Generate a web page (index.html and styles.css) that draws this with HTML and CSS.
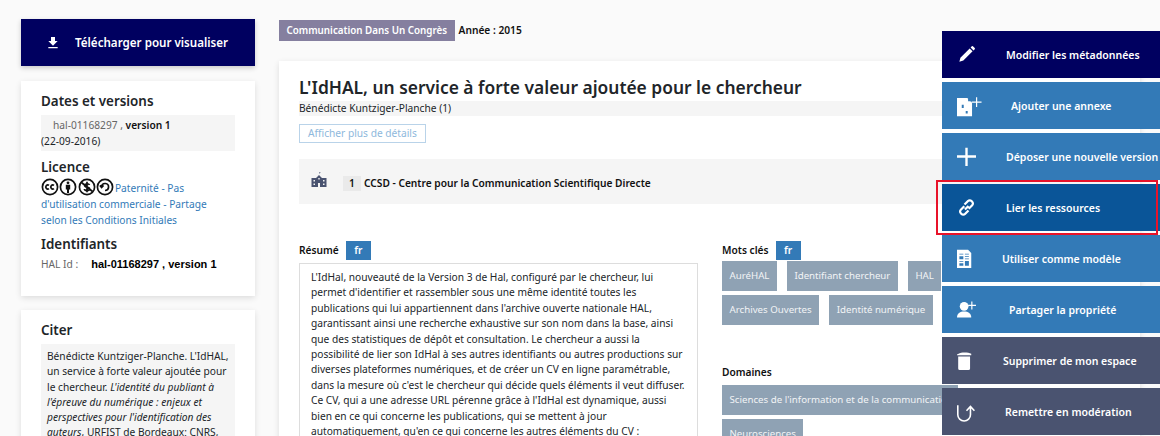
FILE: index.html
```html
<!DOCTYPE html>
<html lang="fr">
<head>
    <meta charset="UTF-8">
    <meta name="viewport" content="width=device-width, initial-scale=1.0">
    <title>L'IdHAL, un service à forte valeur ajoutée pour le chercheur</title>
    <link rel="stylesheet" href="styles.css">
</head>
<body>
    <div class="page">
        <div class="side">
            <a class="download">
                <svg class="download-icon" viewBox="0 0 24 24"><path d="M19 9h-4V3H9v6H5l7 7 7-7zM5 18v2h14v-2H5z"/></svg>
                Télécharger pour visualiser
            </a>

            <div class="box box-info">
                <h3>Dates et versions</h3>
                <div class="version">
                    <span class="version-id">hal-01168297 ,</span> <b>version 1</b><br>(22-09-2016)
                </div>
                <h3>Licence</h3>
                <div class="licence">
                    <svg class="cc" viewBox="0 0 18 18"><circle cx="9" cy="9" r="7.6"/><path d="M8 7.400a2 2 0 1 0 0 3.200M13 7.400a2 2 0 1 0 0 3.200"/></svg>
                    <svg class="cc" viewBox="0 0 18 18"><circle cx="9" cy="9" r="7.6"/><circle class="cc-fill" cx="9" cy="4.800" r="1.400"/><path class="cc-fill" d="M6.800 6.800h4.400v4.600H10V15H8v-3.600H6.800z"/></svg>
                    <svg class="cc" viewBox="0 0 18 18"><circle cx="9" cy="9" r="7.6"/><path d="M3.500 4.500l11 9M11.500 7A2.500 1.700 0 0 0 6.600 7.400c0 2.400 5 1 5 3.400A2.600 1.700 0 0 1 6.400 11M9 3.800v10.400"/></svg>
                    <svg class="cc" viewBox="0 0 18 18"><circle cx="9" cy="9" r="7.6"/><path d="M5.600 8.400A3.500 3.500 0 1 1 9 12.500M3.900 7.400l1.700 2 1.900-2"/></svg>
                    <a class="link">Paternité - Pas d'utilisation commerciale - Partage selon les Conditions Initiales</a>
                </div>
                <h3>Identifiants</h3>
                <div class="hal-id"><span class="hal-label">HAL Id :</span><b>hal-01168297 , version 1</b></div>
            </div>

            <div class="box box-cite">
                <h3>Citer</h3>
                <div class="citation">
                    Bénédicte Kuntziger-Planche. L'IdHAL, un service à forte valeur ajoutée pour le chercheur. <i>L'identité du publiant à l'épreuve du numérique : enjeux et perspectives pour l'identification des auteurs</i>, URFIST de Bordeaux; CNRS, 2015.
                </div>
            </div>
        </div>

        <div class="main">
            <div class="doc-type">
                <span class="type-tag">Communication Dans Un Congrès</span>
                <b>Année : 2015</b>
            </div>

            <div class="doc">
                <h1>L'IdHAL, un service à forte valeur ajoutée pour le chercheur</h1>
                <div class="authors">Bénédicte Kuntziger-Planche (1)</div>
                <a class="details-btn">Afficher plus de détails</a>

                <div class="affiliation">
                    <svg class="school" viewBox="0 0 16 18"><path d="M8 0v2.200l2 .6-2 .6V5l3 3h4.500v9H.5V8H5l3-3V0z"/><path class="school-win" d="M2.500 10h1.500v1.500H2.500zM2.500 13.500h1.500V15H2.500zM12 10h1.500v1.500H12zM12 13.500h1.500V15H12zM7.300 8h1.400v1.500H7.300zM7 13h2v4H7z"/></svg>
                    <span class="aff-num">1</span>
                    <b>CCSD - Centre pour la Communication Scientifique Directe</b>
                </div>

                <div class="columns">
                    <div class="col-left">
                        <div class="section-head"><b>Résumé</b><span class="lang">fr</span></div>
                        <div class="abstract">
                            L'IdHal, nouveauté de la Version 3 de Hal, configuré par le chercheur, lui permet d'identifier et rassembler sous une même identité toutes les publications qui lui appartiennent dans l'archive ouverte nationale HAL, garantissant ainsi une recherche exhaustive sur son nom dans la base, ainsi que des statistiques de dépôt et consultation. Le chercheur a aussi la possibilité de lier son IdHal à ses autres identifiants ou autres productions sur diverses plateformes numériques, et de créer un CV en ligne paramétrable, dans la mesure où c'est le chercheur qui décide quels éléments il veut diffuser. Ce CV, qui a une adresse URL pérenne grâce à l'IdHal est dynamique, aussi bien en ce qui concerne les publications, qui se mettent à jour automatiquement, qu'en ce qui concerne les autres éléments du CV :
                        </div>
                    </div>
                    <div class="col-right">
                        <div class="section-head"><b>Mots clés</b><span class="lang">fr</span></div>
                        <div class="tags">
                            <span class="tag">AuréHAL</span>
                            <span class="tag">Identifiant chercheur</span>
                            <span class="tag">HAL</span>
                            <span class="tag">Archives Ouvertes</span>
                            <span class="tag">Identité numérique</span>
                        </div>
                        <div class="domains-head"><b>Domaines</b></div>
                        <div class="tags">
                            <span class="tag">Sciences de l'information et de la communication</span>
                            <span class="tag">Neurosciences</span>
                        </div>
                    </div>
                </div>
            </div>
        </div>
    </div>

    <div class="actions">
        <a class="action action-navy">
            <svg viewBox="0 0 24 24"><path d="M3 21l1.300-5L16 4.300 19.700 8 8 19.700zM17.200 3.100l1.500-1.500a1 1 0 0 1 1.400 0l2.300 2.300a1 1 0 0 1 0 1.400l-1.500 1.500z"/></svg>
            <span class="label-edit">Modifier les métadonnées</span>
        </a>
        <a class="action">
            <svg viewBox="0 0 24 24"><path d="M0 2.500h13l6 6v17H0z"/><path class="icon-cut" d="M6 11h2.500v4H6zM11 19h2.500v3H11zM14 2.500v4h4.500z"/><path d="M24 1.500h1.500V7H31v1.500h-5.500V14H24V8.500h-5.500V7H24z"/></svg>
            <span class="label-annex">Ajouter une annexe</span>
        </a>
        <a class="action">
            <svg viewBox="0 0 24 24"><path d="M10.500 1h3v9.500H24v3H13.500V24h-3V13.500H0v-3h10.500z"/></svg>
            <span class="label-edit">Déposer une nouvelle version</span>
        </a>
        <a class="action action-dark">
            <svg class="icon-line icon-link" viewBox="0 0 24 24"><path d="M10 14.500l4.500-4.500M9.200 10.500l-4.400 4.400a3.100 3.100 0 0 0 0 4.400l.9.900a3.100 3.100 0 0 0 4.400 0l4.400-4.400M14.800 13.500l4.400-4.400a3.100 3.100 0 0 0 0-4.400l-.9-.9a3.100 3.100 0 0 0-4.400 0L9.500 8.200"/></svg>
            <span class="label-edit">Lier les ressources</span>
        </a>
        <a class="action">
            <svg viewBox="0 0 24 24"><path d="M0 1h14l4 4v19H0z"/><path class="icon-cut" d="M3 6h5v1H3zM10 6h5v1h-5zM3 9h5v4H3zM10 9h5v1h-5zM10 12h5v1h-5zM3 15h5v1H3zM3 18h5v3H3zM10 15h5v6h-5z"/></svg>
            <span class="label-model">Utiliser comme modèle</span>
        </a>
        <a class="action">
            <svg viewBox="0 0 24 24"><circle cx="9" cy="8" r="5.500"/><path d="M0 22c0-5 4-7.500 9-7.500s9 2.500 9 7.500z"/><path d="M18 2h1.500v4H24v1.500h-4.500V12H18V7.500h-4V6h4z"/></svg>
            <span class="label-share">Partager la propriété</span>
        </a>
        <a class="action action-slate">
            <svg viewBox="0 0 24 24"><path d="M2 3.500C5 1.500 14 1.500 18 3.500V5.500H0V4.500zM1.500 7h15v15a2 2 0 0 1-2 2h-11a2 2 0 0 1-2-2z"/></svg>
            <span class="label-delete">Supprimer de mon espace</span>
        </a>
        <a class="action action-slate">
            <svg class="icon-line" viewBox="0 0 24 24"><path d="M1 4v12a8 8 0 0 0 16 0V6M12 11l5-5.500 5 5.500"/></svg>
            <span class="label-moderate">Remettre en modération</span>
        </a>
        <div class="highlight"></div>
    </div>
</body>
</html>
```

FILE: styles.css
```css
html, body {
    height: 100%;
    overflow: hidden;
}
body {
    font-family: "Noto Sans", sans-serif;
    font-size: 10.2px;
    line-height: 1.5;
    color: #212529;
    background-color: #fafafa;
    margin: 0;
}
h1, h3 {
    margin: 0;
    color: #212529;
}
b {
    font-weight: 600;
    color: #111;
}
.page {
    display: flex;
    gap: 24px;
    padding: 19px 0 0 21px;
}

/* colonne de gauche */
.side {
    width: 234px;
    flex-shrink: 0;
}
.download {
    display: flex;
    align-items: center;
    height: 47px;
    padding-left: 24px;
    background-color: #000060;
    color: #fff;
    font-size: 11.6px;
    font-weight: 600;
    box-shadow: 0 2px 5px rgba(0, 0, 0, 0.2);
}
.download-icon {
    width: 16px;
    height: 16px;
    fill: #fff;
    margin-right: 14px;
}
.box {
    background-color: #fff;
    box-shadow: 0 2px 6px rgba(0, 0, 0, 0.12);
    padding: 12px 20px;
}
.box h3 {
    font-size: 13.4px;
    font-weight: 600;
    line-height: 17px;
}
.box-info {
    height: 191px;
    margin-top: 15px;
}
.box-cite {
    margin-top: 14px;
}
.version {
    background-color: #f5f5f5;
    margin: 5px 0 8px;
    padding: 2px 0;
    line-height: 16px;
    height: 32px;
}
.version-id {
    color: #666;
    margin-left: 12px;
}
.licence {
    margin: 2px 0 8px;
    padding-right: 3px;
    line-height: 16px;
}
.cc {
    width: 18px;
    height: 18px;
    margin-right: -2.200px;
    vertical-align: -4px;
    fill: none;
    stroke: #111;
    stroke-width: 1.700;
}
.cc-fill {
    fill: #111;
    stroke: none;
}
.link {
    color: #337ab7;
}
.hal-id {
    margin-top: 3px;
}
.hal-id b {
    font-family: "Liberation Sans", sans-serif;
    font-weight: 700;
    font-size: 11px;
    color: #000;
}
.hal-label {
    color: #666;
    margin-right: 13px;
}
.citation {
    background-color: #f5f5f5;
    margin-top: 5px;
    padding: 5px 5px 4px 6px;
    line-height: 15.300px;
}

/* contenu */
.main {
    width: 861px;
    flex-shrink: 0;
}
.doc-type {
    display: flex;
    align-items: center;
    gap: 4px;
    height: 23px;
}
.type-tag {
    background-color: #857f9f;
    color: #fff;
    font-size: 9.8px;
    font-weight: 600;
    padding: 0 7.500px;
    height: 21px;
    line-height: 21px;
}
.doc {
    background-color: #fff;
    box-shadow: 0 2px 6px rgba(0, 0, 0, 0.12);
    margin-top: 19px;
    padding: 13px 20px;
    height: 400px;
}
h1 {
    font-size: 17.4px;
    font-weight: 600;
    line-height: 27px;
}
.authors {
    background-color: #f5f5f5;
    height: 15px;
    line-height: 15px;
}
.details-btn {
    display: inline-block;
    margin-top: 8px;
    border: 1px solid #b9d3e9;
    padding: 0 8px;
    color: #8eb8dc;
    line-height: 17px;
}
.affiliation {
    display: flex;
    align-items: center;
    box-sizing: border-box;
    height: 45px;
    margin-top: 16px;
    padding: 4px 0 0 12px;
    background-color: #f5f5f5;
}
.school {
    width: 16px;
    height: 18px;
    fill: #4a5370;
    margin-right: 16px;
    margin-top: -10px;
}
.school-win {
    fill: #f5f5f5;
}
.aff-num {
    background-color: #eaeaea;
    font-weight: 600;
    color: #111;
    width: 18px;
    text-align: center;
    margin-right: 3px;
}
.columns {
    display: grid;
    grid-template-columns: 399px 236px;
    gap: 24px;
    margin-top: 37px;
}
.section-head {
    display: flex;
    align-items: center;
    gap: 7px;
    height: 19px;
}
.lang {
    background-color: #337ab7;
    color: #fff;
    font-weight: 600;
    width: 25px;
    height: 19px;
    line-height: 19px;
    text-align: center;
}
.abstract {
    border: 1px solid #ddd;
    margin-top: 3px;
    padding: 6px 11px;
    line-height: 15.400px;
}
.tags {
    display: flex;
    flex-wrap: wrap;
    gap: 4px 10px;
    margin-top: 1px;
}
.tag {
    box-sizing: border-box;
    max-width: 100%;
    overflow: hidden;
    background-color: #8fa2b4;
    color: #f2f4f6;
    font-size: 9.7px;
    padding: 0 7.500px;
    height: 30px;
    line-height: 30px;
    white-space: nowrap;
}
.domains-head {
    margin-top: 40px;
    margin-bottom: 5px;
}

/* panneau d'actions */
.actions {
    position: absolute;
    top: 31px;
    left: 942px;
    width: 218px;
    display: flex;
    flex-direction: column;
    gap: 4px;
}
.action {
    display: flex;
    align-items: center;
    box-sizing: border-box;
    height: 47px;
    padding-top: 2px;
    background-color: #337ab7;
    color: #fff;
    font-size: 10.5px;
    font-weight: 600;
    position: relative;
    white-space: nowrap;
}
.action svg {
    position: absolute;
    left: 15px;
    top: 14px;
    width: 19px;
    height: 19px;
    fill: #fff;
    overflow: visible;
}
.action .icon-line {
    fill: none;
    stroke: #fff;
    stroke-width: 2;
}
.action .icon-link {
    stroke-width: 2.800;
}
.icon-cut {
    fill: #337ab7;
}
.action-navy {
    background-color: #000060;
}
.action-dark {
    background-color: #0a5598;
}
.action-slate {
    background-color: #4a5370;
}
.label-edit {
    margin-left: 64px;
}
.label-annex {
    margin-left: 69px;
}
.label-model {
    margin-left: 60px;
}
.label-share {
    margin-left: 67px;
}
.label-delete {
    margin-left: 61px;
}
.label-moderate {
    margin-left: 63px;
}
.highlight {
    position: absolute;
    left: -6px;
    top: 149px;
    width: 218px;
    height: 51px;
    border: 2px solid #e8132a;
    pointer-events: none;
}
```
